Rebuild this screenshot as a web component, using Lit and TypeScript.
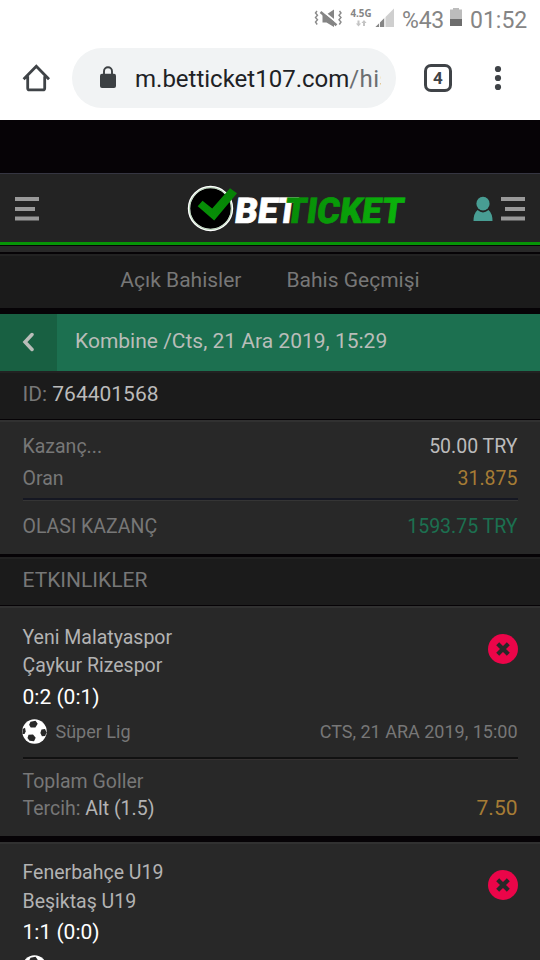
import { LitElement, html, css, nothing } from "lit";
import { customElement, property } from "lit/decorators.js";

interface Match {
  home: string;
  away: string;
  score: string;
  league: string;
  date: string;
  market: string;
  pick: string;
  odds: string;
}

const matches: Match[] = [
  {
    home: "Yeni Malatyaspor",
    away: "Çaykur Rizespor",
    score: "0:2 (0:1)",
    league: "Süper Lig",
    date: "CTS, 21 ARA 2019, 15:00",
    market: "Toplam Goller",
    pick: "Alt (1.5)",
    odds: "7.50",
  },
  {
    home: "Fenerbahçe U19",
    away: "Beşiktaş U19",
    score: "1:1 (0:0)",
    league: "",
    date: "",
    market: "",
    pick: "",
    odds: "",
  },
];

@customElement("status-bar")
class StatusBar extends LitElement {
  static styles = css`
    :host { display: flex; height: 40px; padding-right: 12px; box-sizing: border-box; justify-content: flex-end; align-items: flex-start; color: #858585; background: #fff; }
    .icons { width: 84px; height: 40px; flex: none; }
    .pct { width: 42px; margin-left: 6px; font-size: 23px; line-height: 41px; letter-spacing: -0.2px; }
    .bat { width: 12px; height: 40px; margin: 0 8px 0 6px; }
    .time { font-size: 23px; line-height: 41px; width: 58px; white-space: nowrap; }
    .net { font: 700 10px "Open Sans", "Noto Sans", sans-serif; fill: #858585; }
  `;
  render() {
    return html`
      <svg class="icons" viewBox="312 0 84 40">
        <g fill="none" stroke="#8a8a8a" stroke-width="1.4">
          <path d="M317 11l-1.500 2 2 2.200-2 2.300 2 2.200-2 2.300 1.700 2.500" />
          <path d="M339.500 11l1.500 2-2 2.200 2 2.300-2 2.200 2 2.300-1.700 2.500" />
        </g>
        <path d="M322.500 14.500h4l7.500-5V27l-7.500-4.500h-4z" fill="#858585" />
        <path d="M319.500 8.500L338 23.500" stroke="#fff" stroke-width="2.2" />
        <path d="M320.500 12L336.500 25.200" stroke="#858585" stroke-width="2.6" />
        <text class="net" x="350.500" y="17.300" textLength="21" lengthAdjust="spacingAndGlyphs">4.5G</text>
        <path d="M357.500 20.500h2v3h1.600l-2.600 3-2.600-3h1.600zM363 26v-3h-1.600l2.600-3 2.600 3H365v3z" fill="#c4c4c4" />
        <path d="M375.500 27L394 8.500V27z" fill="#cfcfcf" />
        <path d="M375.500 27L384 18.500V27z" fill="#858585" />
        <path d="M379.500 21v6M385 17v10" stroke="#fff" stroke-width=".9" />
      </svg>
      <span class="pct">%43</span>
      <svg class="bat" viewBox="450 0 12 40">
        <path d="M453 8h6v1.500h3V26h-12V9.500h3z" fill="#bcbcbc" />
        <path d="M450 19h12v7h-12z" fill="#6d6d6d" />
      </svg>
      <span class="time">01:52</span>
    `;
  }
}

@customElement("address-bar")
class AddressBar extends LitElement {
  static styles = css`
    :host { display: flex; align-items: center; height: 80px; box-sizing: border-box; background: #fff; padding: 0 0 4px 22px; }
    .home { width: 28px; height: 30px; margin-right: 22px; }
    .pill { display: flex; align-items: center; width: 324px; height: 60px; box-sizing: border-box; border-radius: 30px; background: #f1f3f4; padding: 0 15px 0 28px; }
    .lock { width: 16px; height: 22px; flex: none; margin-right: 19px; margin-top: -2px; }
    .url { width: 246px; overflow: hidden; white-space: nowrap; font-size: 24px; line-height: 36px; padding-top: 2px; color: #202124; }
    .path { color: #6b6e71; letter-spacing: 0.4px; }
    .tabs { display: grid; place-items: center; width: 28px; height: 28px; box-sizing: border-box; border: 3px solid #3f4347; border-radius: 7px; margin: 0 0 0 28px; font-size: 17px; line-height: 20px; font-weight: 700; color: #3f4347; }
    .dots { width: 8px; height: 26px; margin-left: 42px; }
  `;
  render() {
    return html`
      <svg class="home" viewBox="0 0 28 30">
        <path d="M1.600 16.200L14.300 3.200 27 16.200M5.700 13.200V25.200q0 1.700 1.700 1.700H21q1.700 0 1.700-1.700V13.200" fill="none" stroke="#3f4347" stroke-width="2.800" />
      </svg>
      <div class="pill">
        <svg class="lock" viewBox="0 0 16 22">
          <path d="M4 9V5.300a4 4 0 0 1 8 0V9" fill="none" stroke="#3c4043" stroke-width="1.900" />
          <rect y="7.700" width="16" height="14.300" rx="2" fill="#3c4043" />
        </svg>
        <div class="url">m.betticket107.com<span class="path">/his</span></div>
      </div>
      <div class="tabs">4</div>
      <svg class="dots" viewBox="0 0 8 26" fill="#3f4347">
        <circle cx="4" cy="4" r="3.100" /><circle cx="4" cy="13" r="3.100" /><circle cx="4" cy="22" r="3.100" />
      </svg>
    `;
  }
}

@customElement("site-header")
class SiteHeader extends LitElement {
  static styles = css`
    :host { display: flex; align-items: flex-start; height: 72px; box-sizing: border-box; padding: 0 15px; background: #232323; border-top: 1px solid #353541; border-bottom: 3px solid #069406; }
    .menu { width: 24px; height: 24px; margin-top: 23px; }
    .logo { width: 222px; height: 52px; margin: 9px auto 0 147px; }
    .right { display: flex; gap: 8px; }
    .user { width: 20px; height: 26px; margin-top: 22px; }
    .word { font: 900 35.5px Roboto, sans-serif; stroke-width: 0.7px; }
  `;
  render() {
    return html`
      <svg class="menu" viewBox="0 0 24 24" fill="#999"><path d="M0 0h24v4H0zM0 10h20v4H0zM0 19.500h24v4H0z" /></svg>
      <svg class="logo" viewBox="186 183 222 52">
        <defs>
          <linearGradient id="word" gradientUnits="userSpaceOnUse" x1="287" y1="0" x2="406" y2="0">
            <stop stop-color="#078c07" />
            <stop offset="1" stop-color="#0bb40b" />
          </linearGradient>
          <linearGradient id="tick" x1="0" y1="1" x2="1" y2="0">
            <stop stop-color="#079307" /><stop offset="1" stop-color="#068006" />
          </linearGradient>
        </defs>
        <circle cx="210.500" cy="208.500" r="21.500" fill="#000" stroke="#fff" stroke-width="2.400" />
        <circle cx="210.500" cy="208.500" r="21" fill="none" stroke="#8fbf8f" stroke-width=".7" />
        <path d="M197.700 206.300l4.800-5.600 9.700 7.800 17.800-20.200 7 5-22.800 27.200z" fill="url(#tick)" />
        <g transform="translate(0 222.500) skewX(-7.500)">
          <text class="word" x="233.500" y="0" fill="#fff" stroke="#fff" textLength="43" lengthAdjust="spacingAndGlyphs">BE</text>
          <text class="word" x="276" y="0" fill="#fff" stroke="#fff" textLength="20" lengthAdjust="spacingAndGlyphs">T</text>
          <text class="word" x="283.500" y="0" fill="url(#word)" stroke="url(#word)" textLength="119" lengthAdjust="spacingAndGlyphs">TICKET</text>
        </g>
      </svg>
      <div class="right">
        <svg class="user" viewBox="0 0 20 26" fill="#489d93">
          <ellipse cx="10" cy="7.700" rx="6.600" ry="6.900" />
          <path d="M.5 25q0-7.500 4-11 5.500 4.800 11 0 4 3.500 4 11z" />
        </svg>
        <svg class="menu" viewBox="0 0 24 24" fill="#999"><path d="M0 0h24v4H0zM4 10h20v4H4zM0 19.500h24v4H0z" /></svg>
      </div>
    `;
  }
}

@customElement("match-card")
class MatchCard extends LitElement {
  @property({ attribute: false }) match!: Match;
  static styles = css`
    :host { display: block; height: 230px; box-sizing: border-box; padding: 0 22.5px; background: #282828; border-top: 2px solid #313131; color: #777; font-size: 19.500px; }
    .top { display: flex; justify-content: space-between; align-items: flex-start; height: 106px; }
    .names { padding-top: var(--lead, 16px); }
    .team { line-height: 28px; color: #b3b3b3; white-space: nowrap; }
    .team + .team { padding-top: var(--nudge, 0px); }
    .score { line-height: 36px; margin-top: calc(-1px - var(--nudge, 0px)); color: #fff; font-size: 21px; }
    .lost { width: 30px; height: 30px; margin-top: 26px; }
    .meta { display: flex; align-items: center; height: 34px; font-size: 18px; white-space: nowrap; }
    .ball { width: 25px; height: 25px; margin: 0 8.500px 0 -0.500px; }
    .date { margin-left: auto; }
    .line { height: 2px; margin-top: 9px; background: #111; border-bottom: 1px solid #353131; }
    .bet { padding-top: 8px; line-height: 27px; }
    .row { display: flex; justify-content: space-between; }
    .pick { color: #b3b3b3; }
    .odds { color: #a67c35; font-size: 21px; }
  `;
  render() {
    const m = this.match;
    return html`
      <div class="top">
        <div class="names"><div class="team">${m.home}</div><div class="team">${m.away}</div><div class="score">${m.score}</div></div>
        <svg class="lost" viewBox="0 0 30 30">
          <circle cx="15" cy="15" r="15" fill="#eb0549" />
          <path d="M9.700 9.700L20.300 20.300M20.300 9.700L9.700 20.300" stroke="#282828" stroke-width="4.200" />
        </svg>
      </div>
      <div class="meta">
        <svg class="ball" viewBox="0 0 25 25">
          <circle cx="12.500" cy="12.500" r="12.200" fill="#fff" />
          <g fill="#282828">
            <path d="M8.500 2.700l5-.9 2.200 3-2.300 3.700-4.700-.1-1.600-2.700z" />
            <path d="M19.500 10.500l3.500-.4 1.500 3.200-1.300 3.800-3.300.2-1.500-3.300z" />
            <path d="M6.500 15.800l4.500-.3 2.700 3.200-1.700 3.500-4.500-.4-2-2.800z" />
            <path d="M.7 10l2.300-1.200.7 3.700-1.200 2.600L.5 15z" />
          </g>
        </svg>
        <span>${m.league}</span><span class="date">${m.date}</span>
      </div>
      ${m.market
        ? html`<div class="line"></div>
            <div class="bet">
              <div>${m.market}</div>
              <div class="row"><span>Tercih: <span class="pick">${m.pick}</span></span><span class="odds">${m.odds}</span></div>
            </div>`
        : nothing}
    `;
  }
}

@customElement("app-root")
class AppRoot extends LitElement {
  static styles = css`
    :host { display: block; width: 540px; height: 960px; overflow: hidden; background: #060306; font-family: Roboto, "Noto Sans", sans-serif; color: #777; font-size: 19.500px; }
    .gap { height: 53px; }
    .strip { height: 6px; margin-top: 1px; background: #282828; }
    .tabs { display: flex; justify-content: center; gap: 45px; height: 54px; margin-top: 2px; box-sizing: border-box; border-top: 2px solid #222; background: #1b1b1b; line-height: 49px; font-size: 21px; }
    .title { display: flex; height: 57px; margin-top: 6px; background: #1c7050; color: #b9bdb9; line-height: 54px; font-size: 21px; }
    .back { display: grid; place-items: center; width: 57px; background: #186042; }
    .chev { width: 12px; height: 20px; margin: -2px 2px 0 0; }
    .name { margin-left: 18px; white-space: nowrap; }
    .bar { height: 48px; box-sizing: border-box; border-top: 2px solid #222; padding-left: 22.500px; background: #1b1b1b; line-height: 42px; font-size: 21px; }
    .val { color: #bbb; }
    .sum { height: 134px; margin-top: 1px; box-sizing: border-box; border-top: 2px solid #313131; background: #282828; padding: 9px 22.500px 0; }
    .row { display: flex; justify-content: space-between; line-height: 32px; }
    .line { height: 2px; margin-top: 3px; background: #151722; border-bottom: 1px solid #353535; }
    .total { padding-top: 10px; }
    .odds { color: #a67c35; }
    .win { color: #1c7050; }
    .events { margin-top: 3px; }
    .card1 { margin-top: 1px; }
    .card2 { margin-top: 6px; --lead: 15px; --nudge: 1px; }
  `;
  render() {
    return html`
      <status-bar></status-bar>
      <address-bar></address-bar>
      <div class="gap"></div>
      <site-header></site-header>
      <div class="strip"></div>
      <div class="tabs"><span>Açık Bahisler</span><span>Bahis Geçmişi</span></div>
      <div class="title">
        <div class="back">
          <svg class="chev" viewBox="0 0 12 20"><path d="M10 2.500L3 10l7 7.500" fill="none" stroke="#b9bdb9" stroke-width="3.500" stroke-linecap="round" /></svg>
        </div>
        <span class="name">Kombine /Cts, 21 Ara 2019, 15:29</span>
      </div>
      <div class="bar">ID: <span class="val">764401568</span></div>
      <div class="sum">
        <div class="row"><span>Kazanç...</span><span class="val">50.00 TRY</span></div>
        <div class="row"><span>Oran</span><span class="odds">31.875</span></div>
        <div class="line"></div>
        <div class="row total"><span>OLASI KAZANÇ</span><span class="win">1593.75 TRY</span></div>
      </div>
      <div class="bar events">ETKINLIKLER</div>
      ${matches.map((m, i) => html`<match-card class=${"card" + (i + 1)} .match=${m}></match-card>`)}
    `;
  }
}
